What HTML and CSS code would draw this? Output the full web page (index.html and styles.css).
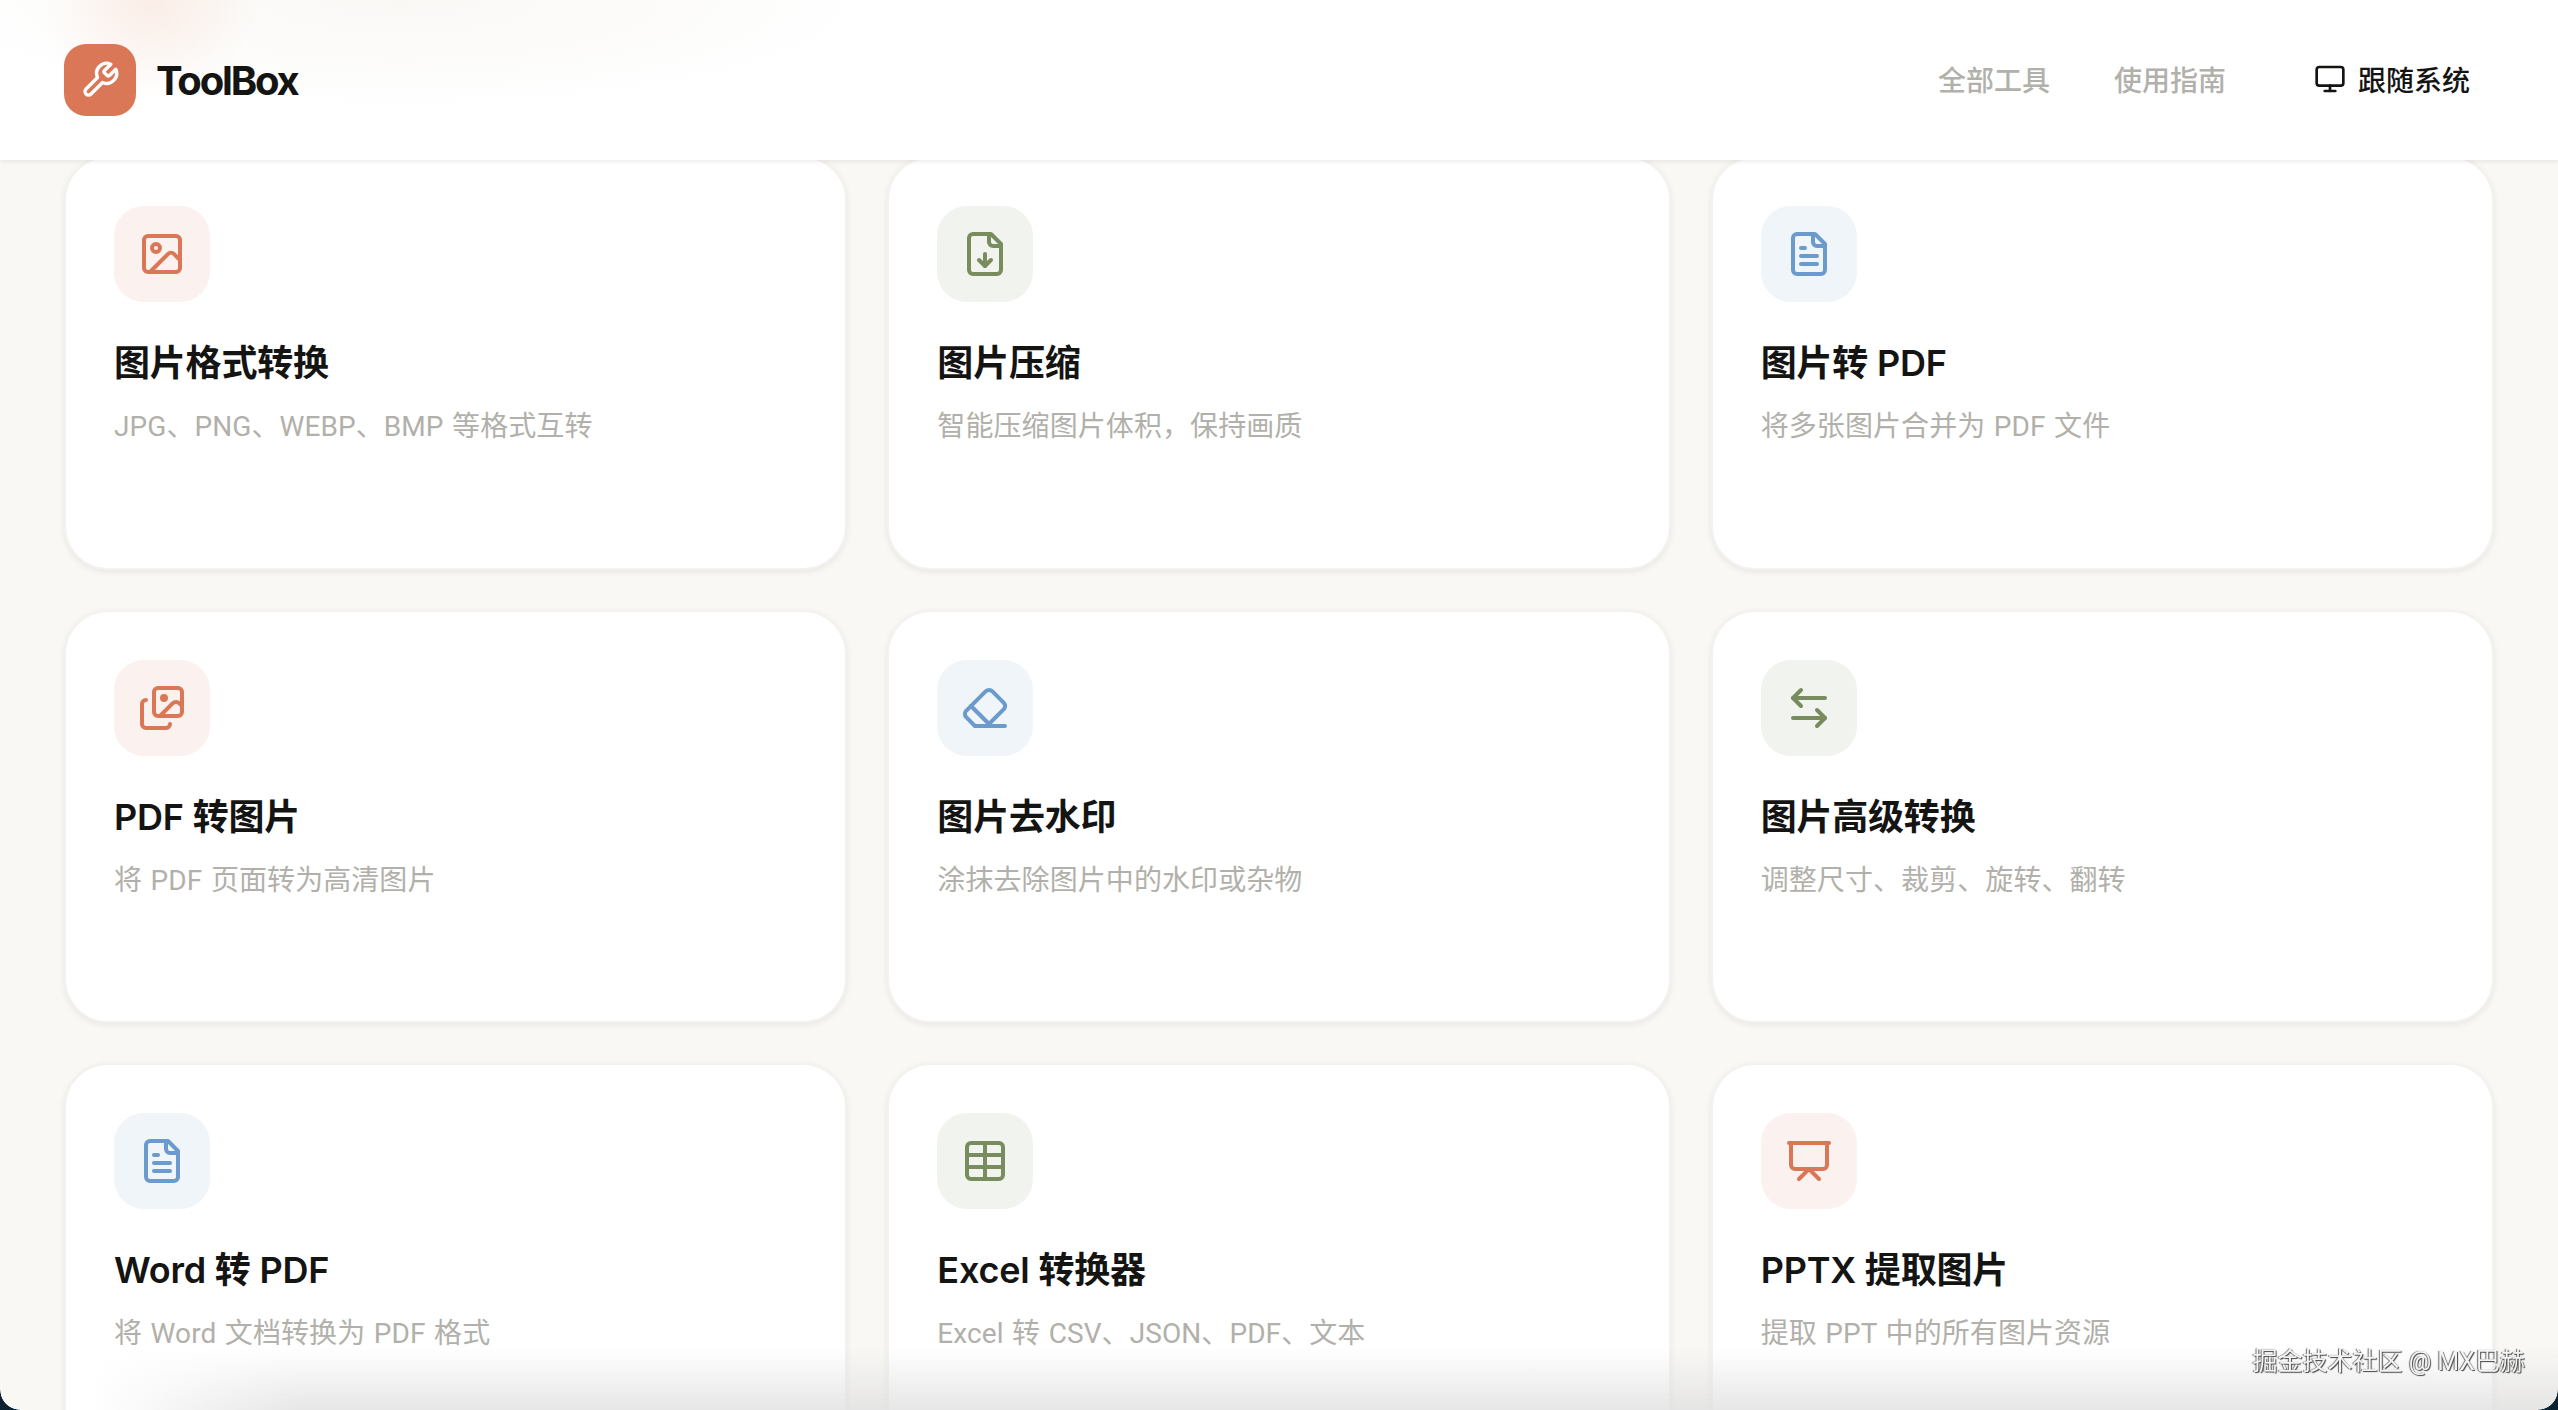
FILE: index.html
```html
<!DOCTYPE html>
<html lang="zh-CN">
<head>
    <meta charset="UTF-8">
    <meta name="viewport" content="width=device-width, initial-scale=1.0">
    <title>ToolBox</title>
    <link rel="stylesheet" href="styles.css">
</head>
<body>
    <header class="topbar">
        <a class="brand">
            <span class="brand-logo">
                <svg class="icon-logo" viewBox="0 0 24 24"><path d="M14.7 6.3a1 1 0 0 0 0 1.4l1.6 1.6a1 1 0 0 0 1.4 0l3.77-3.77a6 6 0 0 1-7.94 7.94l-6.91 6.91a2.12 2.12 0 0 1-3-3l6.91-6.91a6 6 0 0 1 7.94-7.94l-3.76 3.76z"/></svg>
            </span>
            <span class="brand-name">ToolBox</span>
        </a>
        <nav class="nav">
            <a class="nav-link">全部工具</a>
            <a class="nav-link">使用指南</a>
            <button class="theme-btn">
                <svg class="icon-theme" viewBox="0 0 24 24"><rect x="2" y="3" width="20" height="14" rx="2"/><path d="M8 21h8"/><path d="M12 17v4"/></svg>
                跟随系统
            </button>
        </nav>
    </header>

    <main class="tool-grid">
        <article class="tool-card coral">
            <div class="tool-icon">
                <svg viewBox="0 0 24 24"><rect x="3" y="3" width="18" height="18" rx="2"/><circle cx="9" cy="9" r="2"/><path d="m21 15-3.086-3.086a2 2 0 0 0-2.828 0L6 21"/></svg>
            </div>
            <h3 class="tool-title">图片格式转换</h3>
            <p class="tool-desc">JPG、PNG、WEBP、BMP 等格式互转</p>
        </article>
        <article class="tool-card green">
            <div class="tool-icon">
                <svg viewBox="0 0 24 24"><path d="M15 2H6a2 2 0 0 0-2 2v16a2 2 0 0 0 2 2h12a2 2 0 0 0 2-2V7Z"/><path d="M14 2v4a2 2 0 0 0 2 2h4"/><path d="M12 18v-6"/><path d="m9 15 3 3 3-3"/></svg>
            </div>
            <h3 class="tool-title">图片压缩</h3>
            <p class="tool-desc">智能压缩图片体积，保持画质</p>
        </article>
        <article class="tool-card blue">
            <div class="tool-icon">
                <svg viewBox="0 0 24 24"><path d="M15 2H6a2 2 0 0 0-2 2v16a2 2 0 0 0 2 2h12a2 2 0 0 0 2-2V7Z"/><path d="M14 2v4a2 2 0 0 0 2 2h4"/><path d="M10 9H8"/><path d="M16 13H8"/><path d="M16 17H8"/></svg>
            </div>
            <h3 class="tool-title">图片转 PDF</h3>
            <p class="tool-desc">将多张图片合并为 PDF 文件</p>
        </article>

        <article class="tool-card coral">
            <div class="tool-icon">
                <svg viewBox="0 0 24 24"><path d="m22 11-1.296-1.296a2.4 2.4 0 0 0-3.408 0L11 16"/><path d="M4 8a2 2 0 0 0-2 2v10a2 2 0 0 0 2 2h10a2 2 0 0 0 2-2"/><circle cx="13" cy="7" r="1" class="dot"/><rect x="8" y="2" width="14" height="14" rx="2"/></svg>
            </div>
            <h3 class="tool-title">PDF 转图片</h3>
            <p class="tool-desc">将 PDF 页面转为高清图片</p>
        </article>
        <article class="tool-card blue">
            <div class="tool-icon">
                <svg viewBox="0 0 24 24"><path d="m7 21-4.3-4.3c-1-1-1-2.5 0-3.4l9.6-9.6c1-1 2.5-1 3.4 0l5.6 5.6c1 1 1 2.5 0 3.4L13 21"/><path d="M22 21H7"/><path d="m5 11 9 9"/></svg>
            </div>
            <h3 class="tool-title">图片去水印</h3>
            <p class="tool-desc">涂抹去除图片中的水印或杂物</p>
        </article>
        <article class="tool-card green">
            <div class="tool-icon">
                <svg viewBox="0 0 24 24"><path d="M8 3 4 7l4 4"/><path d="M4 7h16"/><path d="m16 21 4-4-4-4"/><path d="M20 17H4"/></svg>
            </div>
            <h3 class="tool-title">图片高级转换</h3>
            <p class="tool-desc">调整尺寸、裁剪、旋转、翻转</p>
        </article>

        <article class="tool-card blue">
            <div class="tool-icon">
                <svg viewBox="0 0 24 24"><path d="M15 2H6a2 2 0 0 0-2 2v16a2 2 0 0 0 2 2h12a2 2 0 0 0 2-2V7Z"/><path d="M14 2v4a2 2 0 0 0 2 2h4"/><path d="M10 9H8"/><path d="M16 13H8"/><path d="M16 17H8"/></svg>
            </div>
            <h3 class="tool-title">Word 转 PDF</h3>
            <p class="tool-desc">将 Word 文档转换为 PDF 格式</p>
        </article>
        <article class="tool-card green">
            <div class="tool-icon">
                <svg viewBox="0 0 24 24"><path d="M12 3v18"/><rect x="3" y="3" width="18" height="18" rx="2"/><path d="M3 9h18"/><path d="M3 15h18"/></svg>
            </div>
            <h3 class="tool-title">Excel 转换器</h3>
            <p class="tool-desc">Excel 转 CSV、JSON、PDF、文本</p>
        </article>
        <article class="tool-card coral">
            <div class="tool-icon">
                <svg viewBox="0 0 24 24"><path d="M2 3h20"/><path d="M21 3v11a2 2 0 0 1-2 2H5a2 2 0 0 1-2-2V3"/><path d="m7 21 5-5 5 5"/></svg>
            </div>
            <h3 class="tool-title">PPTX 提取图片</h3>
            <p class="tool-desc">提取 PPT 中的所有图片资源</p>
        </article>
    </main>

    <div class="bottom-fade"></div>
    <div class="corner corner-left"></div>
    <div class="corner corner-right"></div>
    <div class="watermark">掘金技术社区 @ MX巴赫</div>
</body>
</html>
```

FILE: styles.css
```css
* {
    box-sizing: border-box;
}
html, body {
    height: 100%;
}
body {
    margin: 0;
    overflow: hidden;
    background-color: #f9f8f5;
    color: #141413;
    font-family: Inter, "Noto Sans CJK SC", sans-serif;
}

/* top bar */
.topbar {
    position: relative;
    z-index: 2;
    display: flex;
    align-items: flex-start;
    justify-content: space-between;
    height: 160px;
    padding: 44px 64px 0;
    background-color: #fff;
    background-image:
        radial-gradient(ellipse 110px 100px at 150px 0, rgba(240, 170, 140, .18), transparent),
        radial-gradient(ellipse 480px 110px at 400px 0, rgba(232, 226, 214, .24), transparent);
    box-shadow: 0 2px 4px rgba(20, 20, 19, .07);
}
.brand {
    display: flex;
    align-items: center;
    gap: 20px;
}
.brand-logo {
    display: flex;
    align-items: center;
    justify-content: center;
    width: 72px;
    height: 72px;
    border-radius: 22px;
    background-color: #d97757;
}
.icon-logo {
    width: 40px;
    height: 40px;
    fill: none;
    stroke: #fff;
    stroke-width: 2;
    stroke-linecap: round;
    stroke-linejoin: round;
}
.brand-name {
    font-size: 40px;
    font-weight: 700;
    letter-spacing: -2.2px;
}
.nav {
    display: flex;
    align-items: center;
    height: 70px;
    gap: 64px;
}
.nav-link {
    font-size: 28px;
    font-weight: 500;
    color: #b1b0aa;
}
.theme-btn {
    display: flex;
    align-items: center;
    gap: 12px;
    padding: 0 24px;
    border: none;
    background: none;
    color: #141413;
    font-family: inherit;
    font-size: 28px;
    font-weight: 500;
}
.icon-theme {
    width: 32px;
    height: 32px;
    fill: none;
    stroke: currentColor;
    stroke-width: 2;
    stroke-linecap: round;
    stroke-linejoin: round;
}

/* cards */
.tool-grid {
    display: grid;
    grid-template-columns: repeat(3, 1fr);
    grid-auto-rows: 413.5px;
    gap: 40px;
    margin-top: -4px;
    padding: 0 64px;
}
.tool-card {
    padding: 48px;
    border: 2px solid #f3f2ee;
    border-radius: 44px;
    background-color: #fff;
    box-shadow: 0 2px 6px rgba(20, 20, 19, .08);
}
.tool-icon {
    display: flex;
    align-items: center;
    justify-content: center;
    width: 96px;
    height: 96px;
    margin-bottom: 41px;
    border-radius: 30px;
}
.tool-icon svg {
    width: 48px;
    height: 48px;
    fill: none;
    stroke: currentColor;
    stroke-width: 2;
    stroke-linecap: round;
    stroke-linejoin: round;
}
.tool-icon .dot {
    fill: currentColor;
}
.coral .tool-icon {
    color: #d97757;
    background-color: rgba(217, 119, 87, .1);
}
.blue .tool-icon {
    color: #6a9bcc;
    background-color: rgba(106, 155, 204, .1);
}
.green .tool-icon {
    color: #788c5d;
    background-color: rgba(120, 140, 93, .1);
}
.tool-title {
    margin: 0 0 21px;
    font-size: 36px;
    font-weight: 600;
    line-height: 40px;
    letter-spacing: -.2px;
    color: #141413;
}
.tool-desc {
    margin: 0;
    font-family: Roboto, "Noto Sans CJK SC", sans-serif;
    font-size: 28px;
    line-height: 45px;
    letter-spacing: .08px;
    word-spacing: 1.5px;
    color: #b1b0aa;
}

/* screen capture leftovers */
.bottom-fade {
    position: fixed;
    left: 0;
    right: 0;
    bottom: 0;
    z-index: 3;
    height: 62px;
    background: linear-gradient(rgba(225, 225, 225, 0), rgba(222, 222, 222, .75));
    -webkit-mask-image: linear-gradient(90deg, transparent 90px, #000 300px);
    mask-image: linear-gradient(90deg, transparent 90px, #000 300px);
    pointer-events: none;
}
.corner {
    position: fixed;
    bottom: 0;
    z-index: 4;
    width: 20px;
    height: 20px;
}
.corner-left {
    left: 0;
    background: radial-gradient(circle 20px at 100% 0, transparent 97%, #0b2233);
}
.corner-right {
    right: 0;
    background: radial-gradient(circle 20px at 0 0, transparent 97%, #0b2233);
}
.watermark {
    position: fixed;
    right: 33px;
    bottom: 30px;
    z-index: 5;
    font-family: Roboto, "Noto Sans CJK SC", sans-serif;
    font-size: 25px;
    line-height: 36px;
    color: #f4f4f4;
    text-shadow: 1px 1px 1px #444, -1px 0 1px #666;
}
```
